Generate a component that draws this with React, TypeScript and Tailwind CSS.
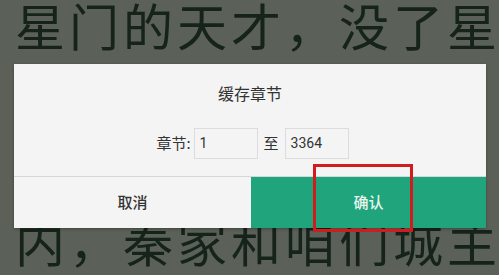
const lines = ["星门的天才，没了星", "这样的天才来到我", "我们城中诸位可要", "内，秦家和咱们城主"]

const App: React.FC = () => {
    return (
        <div className="relative w-[499px] h-[275px] overflow-hidden bg-[#5b6058]" style={{ fontFamily: '"Noto Sans CJK SC", "Noto Sans", sans-serif' }}>
            {/* Reader text behind the dialog */}
            <div className="pl-[15px] pt-0 text-[#15231a] text-[50px] leading-[72px] tracking-[4px] -mt-[12px]">
                {lines.map((line, index) => <div key={index} className="whitespace-nowrap">{line}</div>)}
            </div>

            {/* Dialog */}
            <div className="absolute left-[14px] top-[64px] w-[472px] bg-[#f4f4f4] shadow-[0_1px_3px_rgba(0,0,0,0.3)]">
                <div className="h-[112px] flex flex-col items-center">
                    <div className="mt-[17px] text-[16px] leading-[24px] text-[#333]">缓存章节</div>
                    <div className="mt-[23px] ml-[5px] flex flex-row items-center text-[15px] text-[#333]">
                        <span className="mr-[3px]">章节:</span>
                        <div className="w-[64px] h-[31px] border border-[#dcdcdc] bg-[#f4f4f4] flex items-center pl-[5px] text-[14px]" style={{ fontFamily: "Roboto, sans-serif" }}>1</div>
                        <span className="mx-[6px]">至</span>
                        <div className="w-[64px] h-[31px] border border-[#dcdcdc] bg-[#f4f4f4] flex items-center pl-[5px] text-[14px]" style={{ fontFamily: "Roboto, sans-serif" }}>3364</div>
                    </div>
                </div>
                <div className="flex flex-row h-[52px] border-t border-[#d6d6d6]">
                    <div className="w-[237px] flex justify-center items-center text-[15px] font-medium text-[#333]">取消</div>
                    <div className="flex-1 flex justify-center items-center bg-[#20a47c] text-[15px] font-medium text-[#e8f5ef]">确认</div>
                </div>
            </div>

            {/* Highlight box */}
            <div className="absolute left-[313px] top-[164px] w-[100px] h-[68px] border-[3px] border-[#d01c1c]" />
        </div>
    )
}

export default App
